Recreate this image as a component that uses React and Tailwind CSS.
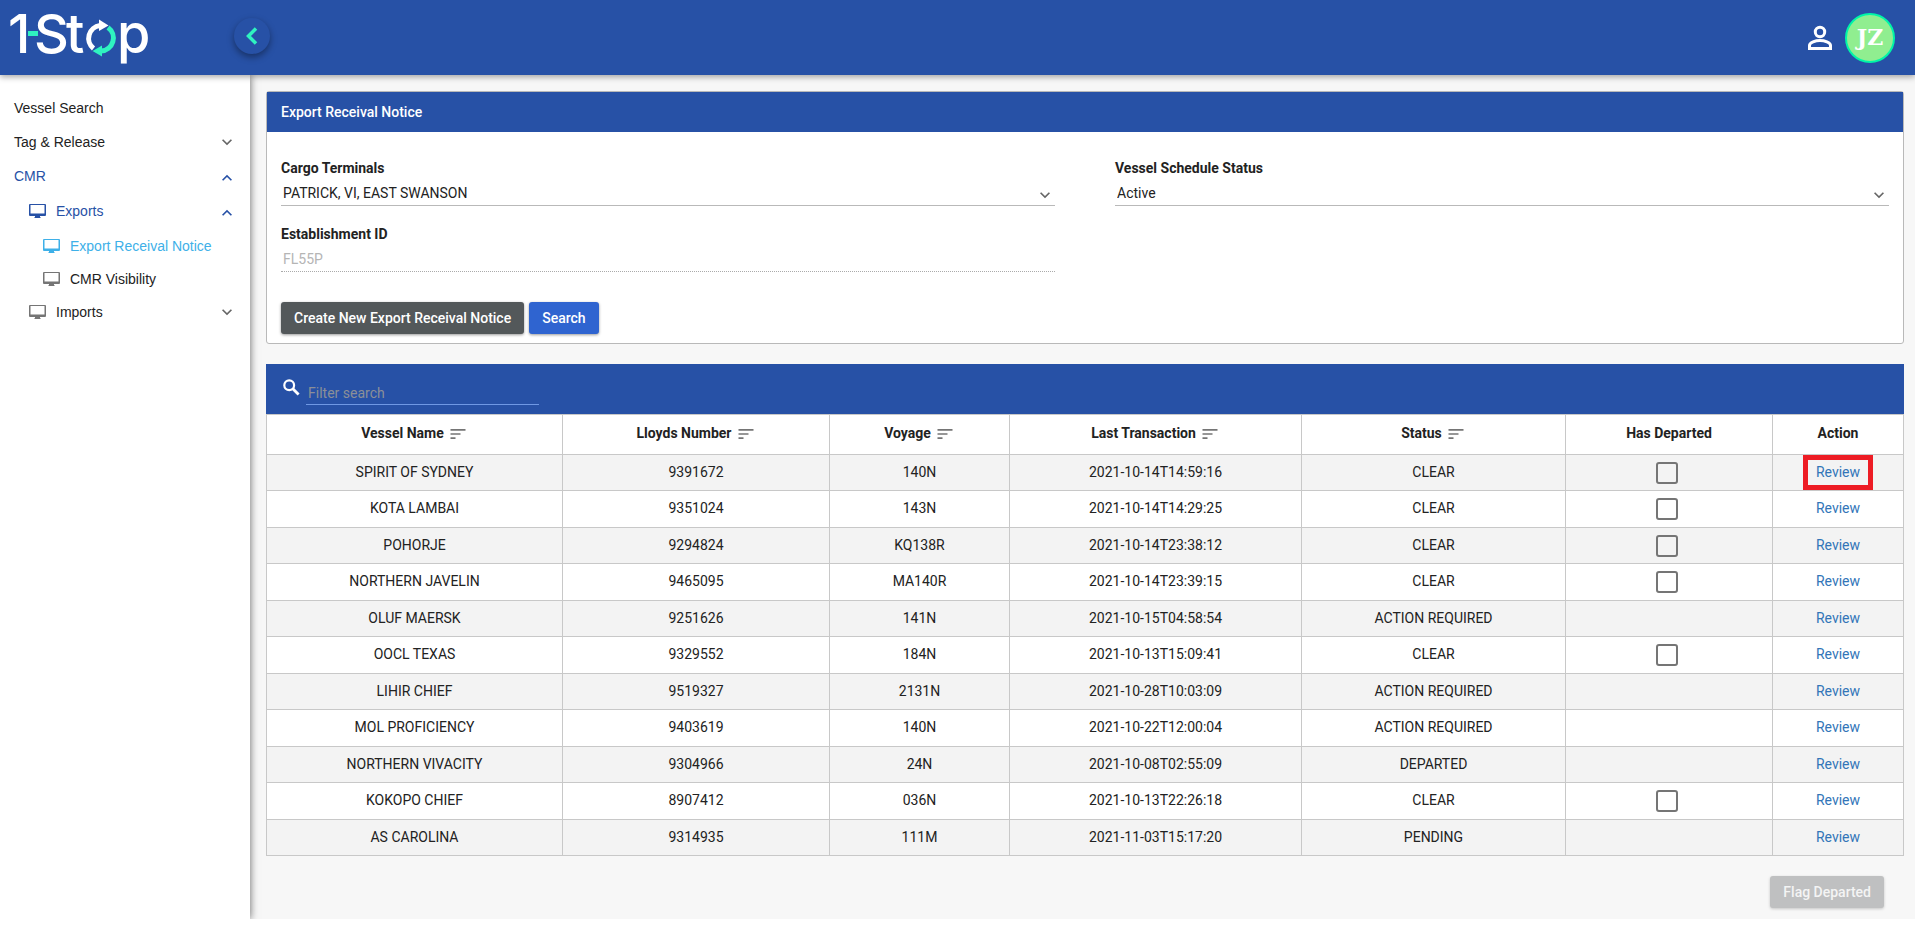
import React, { useState } from "react";
import { MdSort, MdExpandMore, MdExpandLess } from "react-icons/md";

const vessels = [
  { name: "SPIRIT OF SYDNEY", lloyds: "9391672", voyage: "140N", last: "2021-10-14T14:59:16", status: "CLEAR" },
  { name: "KOTA LAMBAI", lloyds: "9351024", voyage: "143N", last: "2021-10-14T14:29:25", status: "CLEAR" },
  { name: "POHORJE", lloyds: "9294824", voyage: "KQ138R", last: "2021-10-14T23:38:12", status: "CLEAR" },
  { name: "NORTHERN JAVELIN", lloyds: "9465095", voyage: "MA140R", last: "2021-10-14T23:39:15", status: "CLEAR" },
  { name: "OLUF MAERSK", lloyds: "9251626", voyage: "141N", last: "2021-10-15T04:58:54", status: "ACTION REQUIRED" },
  { name: "OOCL TEXAS", lloyds: "9329552", voyage: "184N", last: "2021-10-13T15:09:41", status: "CLEAR" },
  { name: "LIHIR CHIEF", lloyds: "9519327", voyage: "2131N", last: "2021-10-28T10:03:09", status: "ACTION REQUIRED" },
  { name: "MOL PROFICIENCY", lloyds: "9403619", voyage: "140N", last: "2021-10-22T12:00:04", status: "ACTION REQUIRED" },
  { name: "NORTHERN VIVACITY", lloyds: "9304966", voyage: "24N", last: "2021-10-08T02:55:09", status: "DEPARTED" },
  { name: "KOKOPO CHIEF", lloyds: "8907412", voyage: "036N", last: "2021-10-13T22:26:18", status: "CLEAR" },
  { name: "AS CAROLINA", lloyds: "9314935", voyage: "111M", last: "2021-11-03T15:17:20", status: "PENDING" },
];

const columns = [
  { label: "Vessel Name", width: "w-[296px]", sortable: true },
  { label: "Lloyds Number", width: "w-[267px]", sortable: true },
  { label: "Voyage", width: "w-[180px]", sortable: true },
  { label: "Last Transaction", width: "w-[292px]", sortable: true },
  { label: "Status", width: "w-[264px]", sortable: true },
  { label: "Has Departed", width: "w-[207px]" },
  { label: "Action", width: "w-[131px]" },
];

const Logo = () => (
  <svg width="160" height="75" viewBox="0 0 160 75" role="img" aria-label="1-Stop">
    <g fill="#fff" fontFamily="Inter, sans-serif" fontSize="54" fontWeight="500">
      <text x="8" y="53">1</text>
      <text x="34" y="53">S</text>
      <text x="66" y="53">t</text>
      <text x="117" y="53">p</text>
    </g>
    <rect x="28" y="31" width="10" height="5" fill="#2ff3c0" />
    <path d="M93.500 48.500A13 13 0 0 1 100 25.500" fill="none" stroke="#fff" strokeWidth="5" />
    <path d="M99 19.500L108.500 25.500L99 31z" fill="#fff" />
    <path d="M108 27.500A13 13 0 0 1 101 51" fill="none" stroke="#2ff3c0" strokeWidth="5" />
    <path d="M102 45.500L92.500 51L102 56.500z" fill="#2ff3c0" />
  </svg>
);

const MonitorIcon = ({ className }) => (
  <svg width="17" height="14" viewBox="0 0 17 14" fill="currentColor" className={`shrink-0 ${className}`}>
    <path
      fillRule="evenodd"
      d="M1 0h15a1 1 0 0 1 1 1v10a1 1 0 0 1-1 1h-5v1l1 1H5l1-1v-1H1a1 1 0 0 1-1-1V1a1 1 0 0 1 1-1zm.5 1v8.500h14V1z"
    />
  </svg>
);

const PersonIcon = () => (
  <svg width="26" height="26" viewBox="0 0 26 26" fill="none" stroke="#fff" strokeWidth="3" className="ml-auto">
    <circle cx="13" cy="7" r="4.700" />
    <path d="M2.500 23.500v-3c0-3 6-5 10.500-5s10.500 2 10.500 5v3z" />
  </svg>
);

const NavItem = ({ label, className, icon, iconClass = "", arrow }) => (
  <li>
    <a href="#" className={`flex items-center pr-[13px] ${className}`}>
      {icon && <MonitorIcon className={iconClass} />}
      <span className={icon ? "ml-[10px]" : ""}>{label}</span>
      {arrow === "down" && <MdExpandMore className="ml-auto size-5 text-[#666]" />}
      {arrow === "up" && <MdExpandLess className="ml-auto mt-1 size-5 text-[#2751a6]" />}
    </a>
  </li>
);

const SelectField = ({ id, label, value }) => (
  <div>
    <label htmlFor={id} className="block h-5 font-bold">
      {label}
    </label>
    <div className="relative">
      <select
        id={id}
        className="block h-7 w-full appearance-none border-b border-[#b9b9b9] bg-transparent pl-[2px] pt-[3px] outline-none"
      >
        <option>{value}</option>
      </select>
      <MdExpandMore className="pointer-events-none absolute right-0 top-[7px] size-5 text-[#666]" />
    </div>
  </div>
);

const App = () => {
  const [filter, setFilter] = useState("");

  const rows = vessels.filter((v) =>
    v.name.toLowerCase().includes(filter.toLowerCase())
  );

  return (
    <div className="font-[Roboto,sans-serif] text-sm text-[#222]">
      <header className="relative z-10 flex h-[75px] items-center bg-[#2751a6] pr-5 shadow-[0_2px_6px_rgba(0,0,0,0.35)]">
        <Logo />
        <button
          type="button"
          aria-label="Collapse menu"
          className="mb-[3px] ml-[74px] flex size-9 items-center justify-center rounded-full text-[#2ff3c0] shadow-[0_3px_7px_rgba(0,0,0,0.4)]"
        >
          <svg width="12" height="18" viewBox="0 0 12 18" fill="none" stroke="currentColor" strokeWidth="3.500">
            <path d="M10 1.500L2.500 9L10 16.500" />
          </svg>
        </button>
        <PersonIcon />
        <div className="ml-3 flex size-[50px] items-center justify-center rounded-full border-2 border-[#00f5a8] bg-[#90ee90] font-['DejaVu_Serif',serif] text-[22px] font-bold text-white">
          JZ
        </div>
      </header>

      <div className="flex overflow-hidden">
        <aside className="relative w-[250px] shrink-0 bg-white pt-4 font-['Liberation_Sans',sans-serif] shadow-[0_0_8px_rgba(0,0,0,0.6)]">
          <ul>
            <NavItem label="Vessel Search" className="h-[34px] pl-[14px]" />
            <NavItem label="Tag & Release" className="h-[34px] pl-[14px]" arrow="down" />
            <NavItem label="CMR" className="h-[34px] pl-[14px] text-[#2751a6]" arrow="up" />
            <NavItem label="Exports" className="h-9 pl-[29px] text-[#2751a6]" icon arrow="up" />
            <NavItem label="Export Receival Notice" className="h-[34px] pl-[43px] text-[#3eb0e8]" icon />
            <NavItem label="CMR Visibility" className="h-8 pl-[43px]" icon iconClass="text-[#757575]" />
            <NavItem label="Imports" className="h-[34px] pl-[29px]" icon iconClass="text-[#757575]" arrow="down" />
          </ul>
        </aside>

        <main className="min-w-0 flex-1 bg-[#f7f7f7] pb-[11px] pl-4 pr-[11px] pt-4">
          <section className="rounded-[3px] border border-[#b9b9b9] bg-white">
            <h1 className="flex h-10 items-center bg-[#2751a6] px-[14px] font-medium text-white">
              Export Receival Notice
            </h1>
            <form className="px-[14px] pb-[9px] pt-[26px]" onSubmit={(e) => e.preventDefault()}>
              <div className="grid grid-cols-2 gap-x-[60px] gap-y-[18px]">
                <SelectField id="terminals" label="Cargo Terminals" value="PATRICK, VI, EAST SWANSON" />
                <SelectField id="status" label="Vessel Schedule Status" value="Active" />
                <div>
                  <label htmlFor="establishment" className="block h-5 font-bold">
                    Establishment ID
                  </label>
                  <input
                    id="establishment"
                    disabled
                    defaultValue="FL55P"
                    className="block h-7 w-full border-b border-dotted border-[#aaa] pl-[2px] pt-[3px] text-[#b5b5b5]"
                  />
                </div>
              </div>
              <div className="mt-[30px] flex gap-[5px] font-medium text-white">
                <button type="button" className="h-8 rounded-[3px] bg-[#53585a] px-[13px] shadow-[0_1px_3px_rgba(0,0,0,0.4)]">
                  Create New Export Receival Notice
                </button>
                <button type="submit" className="h-8 rounded-[3px] bg-[#2f64d0] px-[13px] shadow-[0_1px_3px_rgba(0,0,0,0.4)]">
                  Search
                </button>
              </div>
            </form>
          </section>

          <div className="mt-5 flex h-[50px] bg-[#2751a6] pl-[17px]">
            <svg width="17" height="17" viewBox="0 0 17 17" fill="none" stroke="#fff" className="mt-[15px]">
              <circle cx="6.200" cy="6.200" r="4.900" strokeWidth="2.200" />
              <path d="M9.800 9.800L15.600 15.600" strokeWidth="2.800" />
            </svg>
            <input
              aria-label="Filter search"
              placeholder="Filter search"
              value={filter}
              onChange={(e) => setFilter(e.target.value)}
              className="ml-[6px] mt-4 h-[25px] w-[233px] border-b border-[#6f98e4] pl-[2px] pt-[2px] text-white outline-none placeholder:text-[#8b8f98]"
            />
          </div>

          <table className="w-full table-fixed border-collapse bg-white text-center">
            <thead>
              <tr className="h-10">
                {columns.map((col) => (
                  <th key={col.label} className={`border border-[#c8c8c8] pb-[3px] font-bold ${col.width}`}>
                    <span className="inline-flex items-center gap-1">
                      {col.label}
                      {col.sortable && <MdSort className="mt-[2px] size-5 text-[#757575]" />}
                    </span>
                  </th>
                ))}
              </tr>
            </thead>
            <tbody>
              {rows.map((row) => (
                <tr key={row.lloyds} className="odd:h-[36px] odd:bg-[#f3f3f3] even:h-[37px]">
                  <td className="border border-[#c8c8c8] pb-[2px]">{row.name}</td>
                  <td className="border border-[#c8c8c8] pb-[2px]">{row.lloyds}</td>
                  <td className="border border-[#c8c8c8] pb-[2px]">{row.voyage}</td>
                  <td className="border border-[#c8c8c8] pb-[2px]">{row.last}</td>
                  <td className="border border-[#c8c8c8] pb-[2px]">{row.status}</td>
                  <td className="border border-[#c8c8c8] pr-1">
                    {row.status === "CLEAR" && (
                      <input
                        type="checkbox"
                        aria-label={`${row.name} has departed`}
                        className="mx-auto block size-[22px] appearance-none rounded-[3px] border-2 border-[#757575] checked:bg-[#2751a6]"
                      />
                    )}
                  </td>
                  <td className="relative border border-[#c8c8c8] pb-[2px]">
                    <a href="#" className="text-[#3275b8]">
                      Review
                    </a>
                    {row.lloyds === "9391672" && (
                      <span className="pointer-events-none absolute inset-y-0 left-1/2 w-[70px] -translate-x-1/2 border-5 border-[#ed1c24]" />
                    )}
                  </td>
                </tr>
              ))}
            </tbody>
          </table>

          <div className="mt-5 flex justify-end pr-5">
            <button
              type="button"
              disabled
              className="h-8 rounded-[3px] bg-[#bfc0c1] px-[13px] font-medium text-[#f4f4f4] shadow-[0_1px_3px_rgba(0,0,0,0.2)]"
            >
              Flag Departed
            </button>
          </div>
        </main>
      </div>
    </div>
  );
};

export default App;
